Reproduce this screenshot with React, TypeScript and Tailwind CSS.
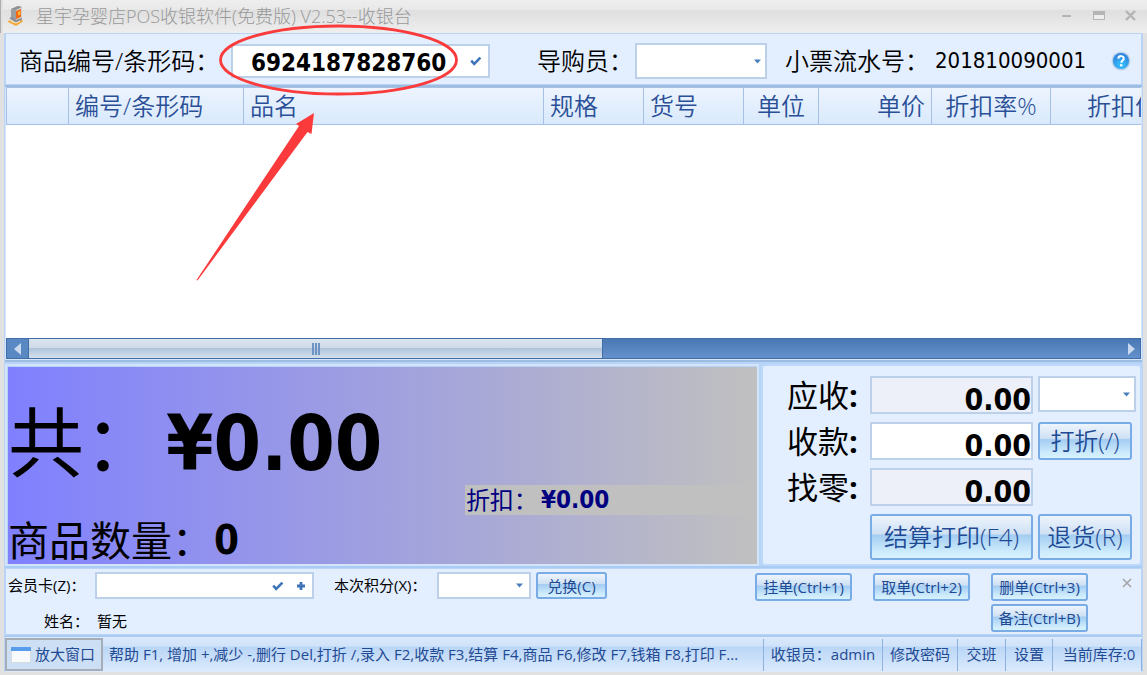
import React from "react";

const ui = "font-['Open_Sans','Noto_Sans_CJK_SC',sans-serif]";
const digits = "font-['DejaVu_Sans_Condensed','DejaVu_Sans','Noto_Sans_CJK_SC',sans-serif]";
const glossy =
  "cursor-pointer whitespace-nowrap rounded-[3px] border-2 border-[#79abe6] bg-[linear-gradient(180deg,#edf4fc_0%,#cfe1f4_42%,#a4cdf2_46%,#cdebfc_85%,#d8f2fd_100%)] text-[#1e4a94]";
const field = "flex min-w-0 items-center border-2 border-[#bdd0ea] bg-white";

function Caret() {
  return (
    <svg width="7" height="5" viewBox="0 0 7 5" className="shrink-0" aria-hidden="true">
      <path d="M0 0.5h7L3.5 4.5z" fill="#4a7ebb" />
    </svg>
  );
}

function Tick() {
  return (
    <svg width="12" height="10" viewBox="0 0 12 10" className="shrink-0" aria-hidden="true">
      <path d="M1.2 4.6 4.2 7.8 10.4 1.6" fill="none" stroke="#3f74b8" strokeWidth="2.6" />
    </svg>
  );
}

function Combo({ id, label, className }: { id: string; label?: string; className: string }) {
  return (
    <div className={`${field} ${className}`}>
      <select id={id} aria-label={label} className="h-full min-w-0 flex-1 appearance-none bg-transparent outline-none">
        <option value=""></option>
      </select>
      <Caret />
    </div>
  );
}

function AppIcon() {
  return (
    <svg width="20" height="22" viewBox="0 0 20 22" aria-hidden="true">
      <path d="M5 4 12 1l4 1v11l-5 3-6-3z" fill="#b4b6b8" />
      <path d="M5 4 12 1l4 1-6 3z" fill="#8d9093" />
      <path d="M5 4l5 1v10l-5-2z" fill="#9b9ea1" />
      <path d="M10 5l6-3v11l-6 2z" fill="#d0d0d0" />
      <path d="M10 6l5-2v8l-5 2z" fill="#f26a16" />
      <path d="M12 7l2.500-1v3.500l-2.500 1z" fill="#ffb638" />
      <path d="M3 13l3-1 4 3 6-2v2l-6 3z" fill="#8b8e92" />
      <path d="M3 15l7 3 6-3 1 1.500-7 4.500-8-4z" fill="#f0a936" />
      <path d="M5 16l5 2 4-2" fill="none" stroke="#f9ead0" />
    </svg>
  );
}

const columns = [
  { name: "", width: "w-[62px]", align: "text-left" },
  { name: "编号/条形码", width: "w-[175px]", align: "text-left" },
  { name: "品名", width: "w-[300px]", align: "text-left" },
  { name: "规格", width: "w-[100px]", align: "text-left" },
  { name: "货号", width: "w-[100px]", align: "text-left" },
  { name: "单位", width: "w-[75px]", align: "text-center" },
  { name: "单价", width: "w-[113px]", align: "text-right" },
  { name: "折扣率%", width: "w-[119px]", align: "text-center" },
  { name: "折扣价", width: "w-[115px]", align: "text-right" },
];

function TitleBar() {
  return (
    <header className="flex h-[33px] items-center bg-[linear-gradient(180deg,#eeeeee_0%,#e9e9e9_28%,#dfdfdf_32%,#eeeeee_100%)] pr-2 pb-0.5 pl-[3px]">
      <AppIcon />
      <h1 className="ml-2.5 text-lg leading-7 font-light whitespace-nowrap text-[#999999]">
        星宇孕婴店POS收银软件(免费版) V2.53--收银台
      </h1>
      <div className="ml-auto flex items-center gap-4">
        <button aria-label="最小化" className="flex h-5 w-4 items-center justify-center">
          <svg width="10" height="4" viewBox="0 0 10 4"><path d="M0 1h9v2H0z" fill="#b4b4b4" /></svg>
        </button>
        <button aria-label="最大化" className="flex h-5 w-4 items-center justify-center">
          <svg width="12" height="10" viewBox="0 0 12 10">
            <path d="M.5.5h11v8H.5z" fill="#eeeeee" stroke="#b4b4b4" />
            <path d="M0 0h12v4H0z" fill="#b4b4b4" />
          </svg>
        </button>
        <button aria-label="关闭" className="flex h-5 w-4 items-center justify-center">
          <svg width="12" height="11" viewBox="0 0 12 11"><path d="M1 1l9 9M10 1l-9 9" stroke="#b4b4b4" strokeWidth="2.400" /></svg>
        </button>
      </div>
    </header>
  );
}

function QueryBar() {
  return (
    <section className="flex h-[52px] items-center border border-[#b9d4f5] bg-[#e3eeff] pt-1 pl-[13px] text-2xl font-[350] whitespace-nowrap text-black">
      <label htmlFor="barcode" className="w-[212px] shrink-0">商品编号/条形码：</label>
      <div className={`${field} h-[34px] w-[259px] pr-1.5`}>
        <input
          id="barcode"
          defaultValue="6924187828760"
          className={`${digits} h-full min-w-0 flex-1 bg-transparent pt-1 pl-[18px] text-2xl font-bold outline-none`}
        />
        <Tick />
      </div>
      <label htmlFor="guide" className="ml-[47px] w-[98px] shrink-0">导购员：</label>
      <Combo id="guide" className="h-9 w-[132px] pr-1" />
      <span className="ml-[18px] w-[150px] shrink-0">小票流水号：</span>
      <span className={`${digits} text-[22px] font-normal`}>201810090001</span>
      <button aria-label="帮助" className="mr-2.5 ml-auto">
        <svg width="20" height="20" viewBox="0 0 20 20">
          <defs>
            <radialGradient id="helpFill" cx="50%" cy="75%" r="65%">
              <stop offset="0" stopColor="#35c4ff" />
              <stop offset="1" stopColor="#2f86de" />
            </radialGradient>
          </defs>
          <circle cx="10" cy="10" r="9.500" fill="#bcd3ea" />
          <circle cx="10" cy="10" r="8" fill="url(#helpFill)" />
          <path d="M7.300 7.600c.2-3.400 5.600-3.200 5.500 0 0 2-2.500 2-2.500 4.200" fill="none" stroke="#fff" strokeWidth="2" />
          <circle cx="10.200" cy="14.300" r="1.200" fill="#fff" />
        </svg>
      </button>
    </section>
  );
}

function GoodsTable() {
  return (
    <section className="flex min-h-[276px] flex-1 flex-col border-t-2 border-b-2 border-[#9dbce2] bg-[#d7e7fb] px-px pb-px">
      <div className="min-w-0 flex-1 overflow-hidden bg-white">
        <table className="w-[1159px] table-fixed border-collapse">
          <thead>
            <tr className="h-[37px] bg-[linear-gradient(180deg,#edf4fe,#d8e9fc)]">
              {columns.map((c, i) => (
                <th
                  key={i}
                  scope="col"
                  className={`${c.width} ${c.align} border border-[#a6c1e5] px-[6px] py-0 text-2xl leading-8 font-[350] whitespace-nowrap text-[#2a4f97]`}
                >
                  {c.name}
                </th>
              ))}
            </tr>
          </thead>
          <tbody></tbody>
        </table>
      </div>
      <div className="flex h-[21px] border border-[#416da8] bg-[linear-gradient(180deg,#4a78b4,#6491cb)]">
        <button aria-label="向左滚动" className="flex w-[21px] shrink-0 items-center justify-center bg-[#5a88c3]">
          <svg width="7" height="12" viewBox="0 0 7 12"><path d="M7 0v12L0 6z" fill="#c9daf0" /></svg>
        </button>
        <div className="flex w-[52%] max-w-[575px] items-center justify-center gap-px border-x border-[#416da8] bg-[linear-gradient(180deg,#dce5ef_0%,#cedae8_45%,#b0c4dc_50%,#d5e0ec_100%)]">
          <i className="h-3 w-0.5 bg-[#6d94c5]" />
          <i className="h-3 w-0.5 bg-[#6d94c5]" />
          <i className="h-3 w-0.5 bg-[#6d94c5]" />
        </div>
        <button aria-label="向右滚动" className="ml-auto flex w-[18px] shrink-0 items-center justify-center">
          <svg width="7" height="12" viewBox="0 0 7 12"><path d="M0 0v12l7-6z" fill="#c9daf0" /></svg>
        </button>
      </div>
    </section>
  );
}

function TotalPanel() {
  return (
    <div className="flex flex-1 flex-col bg-[linear-gradient(90deg,#8080ff,#c0c0c0)] text-black">
      <div className="flex h-[118px] items-center whitespace-nowrap">
        <span className="w-[158px] shrink-0 pt-8 text-[76px] leading-[100px]">共：</span>
        <strong className={`${digits} pt-9 text-[76px] leading-[88px] font-bold`}>¥0.00</strong>
      </div>
      <div className="ml-[61%] flex h-[30px] items-center bg-[#c0c0c0] text-2xl whitespace-nowrap text-[#000080]">
        <span className="w-[76px] pl-px">折扣：</span>
        <strong className={`${digits} font-bold`}>¥0.00</strong>
      </div>
      <div className="flex h-[49px] items-center whitespace-nowrap">
        <span className="w-[206px] shrink-0 text-[41px] leading-[48px]">商品数量：</span>
        <strong className={`${digits} text-[40px] leading-[48px] font-bold`}>0</strong>
      </div>
    </div>
  );
}

function AmountRow({ id, label, editable }: { id: string; label: string; editable?: boolean }) {
  return (
    <>
      <label htmlFor={id} className="text-[31px] leading-[38px] font-normal whitespace-nowrap">
        {label}<b>:</b>
      </label>
      <input
        id={id}
        defaultValue="0.00"
        readOnly={!editable}
        className={`${digits} h-[38px] min-w-0 border-2 border-[#bdd0ea] pt-2 text-right text-3xl font-bold outline-none ${editable ? "bg-white" : "bg-[#edf0f9]"}`}
      />
    </>
  );
}

function PayPanel() {
  return (
    <form
      onSubmit={(e) => e.preventDefault()}
      className="grid w-[381px] shrink-0 grid-cols-[78px_163px_98px] content-start gap-x-[5px] gap-y-2 rounded-sm border-2 border-[#bdd8fa] bg-[#e3eeff] pt-[10px] pl-6 text-black"
    >
      <AmountRow id="due" label="应收" />
      <Combo id="pay" label="付款方式" className="h-9 pr-1" />
      <AmountRow id="paid" label="收款" editable />
      <button className={`${glossy} mr-1 text-2xl leading-7 font-[350]`}>打折(/)</button>
      <AmountRow id="change" label="找零" />
      <span />
      <span />
      <button className={`${glossy} h-[46px] text-2xl font-[350]`}>结算打印(F4)</button>
      <button className={`${glossy} mr-1 h-[46px] text-2xl font-[350]`}>退货(R)</button>
    </form>
  );
}

function MemberBar() {
  return (
    <section className="flex h-[67px] border border-[#b9d4f5] bg-[#e3eeff] pt-[3px] text-[15px] whitespace-nowrap text-black">
      <div className="flex flex-col gap-2.5">
        <div className="flex h-[27px] items-center">
          <label htmlFor="card" className="w-[89px] shrink-0 pl-0.5">会员卡(Z)：</label>
          <div className={`${field} h-[27px] w-[219px] gap-3 pr-1.5`}>
            <input id="card" className="h-full min-w-0 flex-1 bg-transparent px-1 outline-none" />
            <Tick />
            <svg width="10" height="10" viewBox="0 0 10 10" className="shrink-0" aria-hidden="true">
              <path d="M5 1v8M1 5h8" stroke="#3f74b8" strokeWidth="2.800" />
            </svg>
          </div>
          <label htmlFor="points" className="ml-5 w-[103px] shrink-0">本次积分(X)：</label>
          <Combo id="points" className="h-[27px] w-[94px] pr-1.5" />
          <button className={`${glossy} ml-[5px] h-[27px] w-[71px] leading-5`}>兑换(C)</button>
        </div>
        <div className="flex h-6 items-center">
          <span className="w-[91px] pl-[38px]">姓名：</span>
          <span>暂无</span>
        </div>
      </div>
      <div className="mt-px mr-[9px] ml-auto flex items-start gap-[34px]">
        <div className="grid grid-cols-[97px_97px_97px] gap-x-[21px] gap-y-[3px]">
          <button className={`${glossy} h-7 leading-5`}>挂单(Ctrl+1)</button>
          <button className={`${glossy} h-7 leading-5`}>取单(Ctrl+2)</button>
          <button className={`${glossy} h-7 leading-5`}>删单(Ctrl+3)</button>
          <button className={`${glossy} col-start-3 h-7 leading-5`}>备注(Ctrl+B)</button>
        </div>
        <button aria-label="关闭" className="flex h-5 w-2.5 items-center">
          <svg width="10" height="10" viewBox="0 0 10 10" className="shrink-0"><path d="M1 1l8 8M9 1L1 9" stroke="#a5a5a5" strokeWidth="1.600" /></svg>
        </button>
      </div>
    </section>
  );
}

function StatusBar() {
  const cell = "flex h-8 shrink-0 items-center justify-center border-l border-[#8fb1de]";
  return (
    <footer className="flex h-[35px] items-center bg-[linear-gradient(180deg,#dbe9fb_0%,#d0e3fa_25%,#bad6f6_30%,#dcebfd_100%)] text-[15px] whitespace-nowrap text-[#1f4a94]">
      <button className="flex h-[33px] w-[98px] shrink-0 items-center gap-1 border-2 border-[#a5adb8] bg-[#cddff5] pl-1">
        <svg width="20" height="16" viewBox="0 0 20 16" aria-hidden="true">
          <path d="M0 0h20v15H0z" fill="#f7f9fb" />
          <path d="M0 0h20v4H0z" fill="#5a9cec" />
          <path d="M.5 4v11.500h19V4" fill="none" stroke="#d5dbe1" />
        </svg>
        放大窗口
      </button>
      <span className="min-w-0 flex-1 overflow-hidden pl-1.5">
        帮助 F1, 增加 +,减少 -,删行 Del,打折 /,录入 F2,收款 F3,结算 F4,商品 F6,修改 F7,钱箱 F8,打印 F...
      </span>
      <span className={`${cell} w-[119px]`}>收银员：admin</span>
      <button className={`${cell} w-[75px]`}>修改密码</button>
      <button className={`${cell} w-[48px]`}>交班</button>
      <button className={`${cell} w-[47px]`}>设置</button>
      <span className={`${cell} w-[90px] border-r pl-1`}>当前库存:0</span>
    </footer>
  );
}

function Annotation() {
  return (
    <svg width="480" height="300" viewBox="0 0 480 300" className="pointer-events-none absolute top-0 left-0" aria-hidden="true">
      <ellipse cx="338.500" cy="60" rx="118" ry="34" fill="none" stroke="#fb3b3b" strokeWidth="2.800" />
      <path d="M196.500 280 299 126 296 124 314 113 311.500 134 307.500 132 197.500 280.500z" fill="#fb3b3b" />
    </svg>
  );
}

export default function App() {
  return (
    <main className={`${ui} relative flex min-h-screen flex-col overflow-hidden bg-[#e1e1e1]`}>
      <div className="border-l border-[#adadad] pl-0.5"><TitleBar /></div>
      <div className="mr-1 ml-1 flex flex-1 flex-col border-x border-[#b9d4f5] bg-[#d7e7fb]">
        <QueryBar />
        <GoodsTable />
        <div className="flex gap-0.5 bg-[#b7d4f7] pt-0.5">
          <div className="flex min-w-0 flex-1 border-2 border-[#d2e3fa] pt-px pl-px"><TotalPanel /></div>
          <PayPanel />
        </div>
        <div className="border-t-2 border-[#a9cbf4]"><MemberBar /></div>
        <div className="border-t-2 border-[#a9cbf4]"><StatusBar /></div>
      </div>
      <div className="h-[3px]" />
      <Annotation />
    </main>
  );
}
